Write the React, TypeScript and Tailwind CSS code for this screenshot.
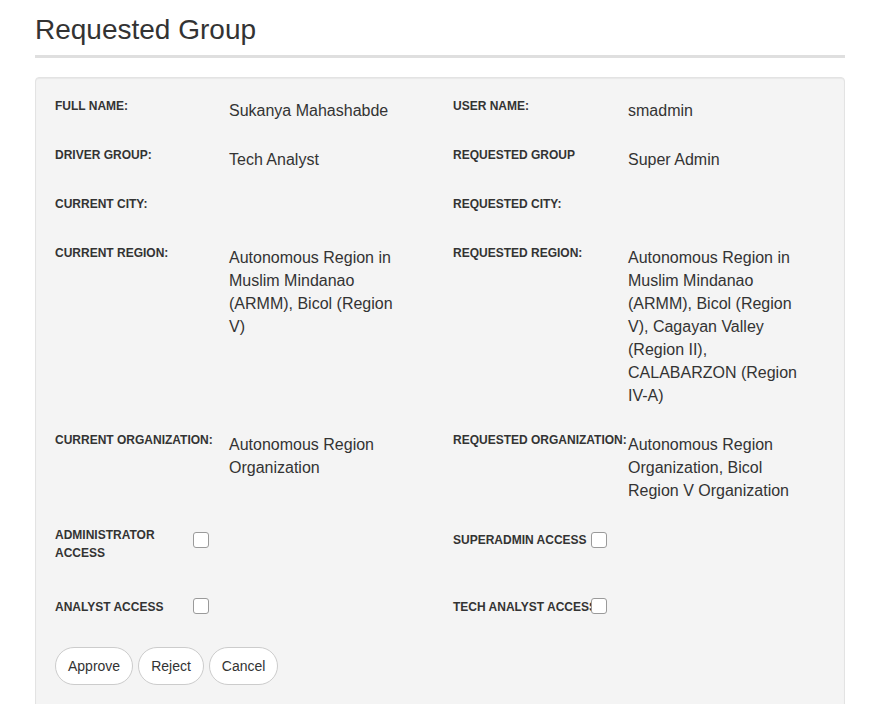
import React from 'react';

const font = { fontFamily: '"Liberation Sans", Arial, sans-serif' };

const rows: { left: [string, string]; right: [string, string] }[] = [
  { left: ['Full Name:', 'Sukanya Mahashabde'], right: ['User Name:', 'smadmin'] },
  { left: ['Driver Group:', 'Tech Analyst'], right: ['Requested Group', 'Super Admin'] },
  { left: ['Current City:', ''], right: ['Requested City:', ''] },
  {
    left: ['Current Region:', 'Autonomous Region in Muslim Mindanao (ARMM), Bicol (Region V)'],
    right: [
      'Requested Region:',
      'Autonomous Region in Muslim Mindanao (ARMM), Bicol (Region V), Cagayan Valley (Region II), CALABARZON (Region IV-A)',
    ],
  },
  {
    left: ['Current Organization:', 'Autonomous Region Organization'],
    right: ['Requested Organization:', 'Autonomous Region Organization, Bicol Region V Organization'],
  },
];

function Field({ label, value, labelWidth }: { label: string; value: string; labelWidth: string }) {
  return (
    <div className="flex w-[398px] shrink-0">
      <div className={`${labelWidth} shrink-0 whitespace-nowrap text-[12px] font-bold uppercase leading-[15.7px] text-[#333]`}>
        {label}
      </div>
      <div className="w-[175px] min-h-[23px] text-[16px] leading-[23px] text-[#333]">{value}</div>
    </div>
  );
}

function Check({ top }: { top: string }) {
  return (
    <input
      type="checkbox"
      className={`${top} relative z-10 block h-4 w-4 shrink-0 appearance-none rounded-[3px] border border-[#9a9a9a] bg-white`}
    />
  );
}

export default function App() {
  return (
    <div className="min-h-screen bg-white" style={font}>
      <div className="ml-[35px] w-[810px]">
        <h1 className="mt-[14px] border-b-[3px] border-[#dfdfdf] pb-[10px] text-[28px] font-normal leading-[31px] text-[#333]">
          Requested Group
        </h1>

        <div className="mt-[19px] rounded-[4px] border border-[#e3e3e3] bg-[#f4f4f4] px-[19px] pt-[21px] pb-[24px] shadow-[inset_0_1px_1px_rgba(0,0,0,0.05)]">
          {rows.map((r, i) => (
            <div key={i} className="mb-[26px] flex">
              <Field label={r.left[0]} value={r.left[1]} labelWidth="w-[174px]" />
              <Field label={r.right[0]} value={r.right[1]} labelWidth="w-[175px]" />
            </div>
          ))}

          {/* access checkboxes */}
          <div className="-mt-[2px] flex">
            <div className="flex w-[398px] shrink-0">
              <div className="w-[138px] text-[12px] font-bold uppercase leading-[18px] text-[#333]">
                Administrator Access
              </div>
              <Check top="mt-[6px]" />
            </div>
            <div className="flex">
              <div className="w-[138px] shrink-0 whitespace-nowrap pt-[5px] text-[12px] font-bold uppercase leading-[18px] text-[#333]">
                Superadmin Access
              </div>
              <Check top="mt-[6px]" />
            </div>
          </div>

          <div className="mt-[36px] flex">
            <div className="flex w-[398px] shrink-0">
              <div className="w-[138px] text-[12px] font-bold uppercase leading-[18px] text-[#333]">
                Analyst Access
              </div>
              <Check top="mt-0" />
            </div>
            <div className="flex">
              <div className="w-[138px] shrink-0 whitespace-nowrap text-[12px] font-bold uppercase leading-[18px] text-[#333]">
                Tech Analyst Access
              </div>
              <Check top="mt-0" />
            </div>
          </div>

          <div className="mt-[31px] flex gap-[5px]">
            {['Approve', 'Reject', 'Cancel'].map((b) => (
              <button
                key={b}
                className="h-[38px] rounded-full border border-[#ccc] bg-white px-[12px] text-[14px] text-[#333]"
              >
                {b}
              </button>
            ))}
          </div>
        </div>
      </div>
    </div>
  );
}
